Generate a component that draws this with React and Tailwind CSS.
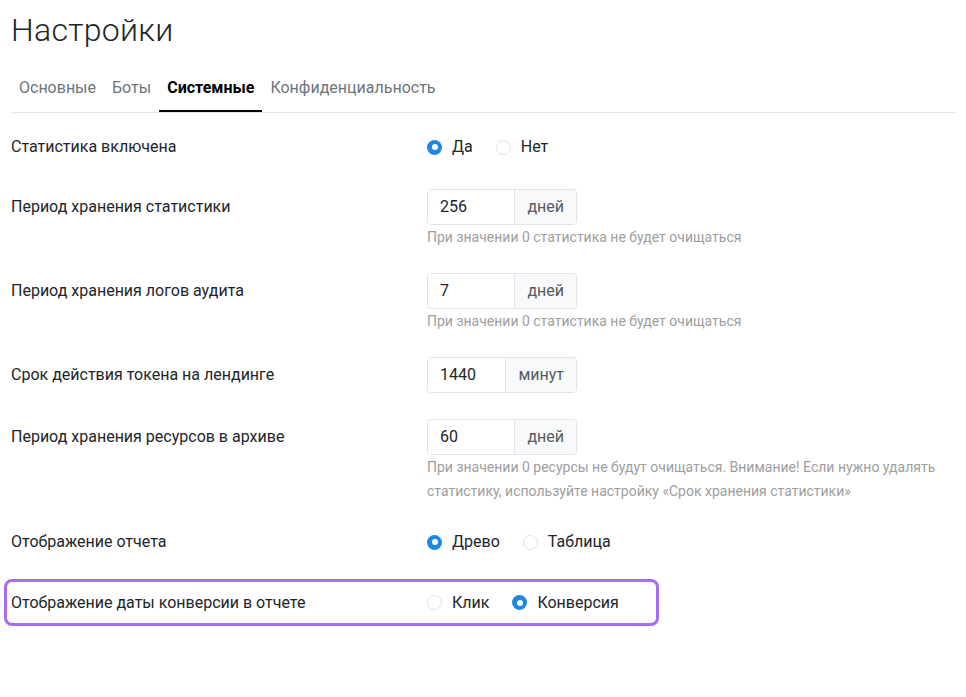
import React from "react";

const tabs = [
  { name: "Основные" },
  { name: "Боты" },
  { name: "Системные", active: true },
  { name: "Конфиденциальность" },
];

const Radio = ({ label, checked }) => (
  <label className="flex items-center gap-[10px] text-base text-[#212529]">
    {checked ? (
      <span className="w-[15px] h-[15px] rounded-full bg-[#1e88e5] flex items-center justify-center">
        <span className="w-[6px] h-[6px] rounded-full bg-white" />
      </span>
    ) : (
      <span className="w-[15px] h-[15px] rounded-full border border-[#dee2e6] bg-white" />
    )}
    <span>{label}</span>
  </label>
);

const RadioGroup = ({ options, value }) => (
  <div className="flex items-center gap-[23px] h-9">
    {options.map((o) => (
      <Radio key={o} label={o} checked={o === value} />
    ))}
  </div>
);

const NumberInput = ({ value, unit }) => (
  <div className="flex w-[150px] h-9 rounded border border-[#e0e3e7] overflow-hidden">
    <div className="flex-1 px-3 flex items-center text-base text-[#212529] bg-white">{value}</div>
    <div className="px-3 flex items-center text-base text-[#555b61] bg-[#f8f9fa] border-l border-[#e0e3e7]">
      {unit}
    </div>
  </div>
);

const Help = ({ children }) => (
  <div className="text-sm leading-6 text-[#9e9e9e] w-[520px]">{children}</div>
);

const Row = ({ label, children, className = "" }) => (
  <div className={`flex ${className}`}>
    <div className="w-[416px] shrink-0 leading-9 text-base text-[#212529]">{label}</div>
    <div>{children}</div>
  </div>
);

export default function App() {
  return (
    <div className="min-h-screen bg-white font-['Roboto',sans-serif] px-[11px]">
      <h1 className="pt-[10px] text-[32px] leading-[40px] font-light text-[#212529] tracking-[0.3px]">
        Настройки
      </h1>

      <nav className="mt-[26px] flex border-b border-[#e2e4e7]">
        {tabs.map((t) => (
          <div
            key={t.name}
            className={`px-2 pb-[10px] leading-6 text-base border-b-2 ${
              t.active ? "border-black text-black font-bold" : "border-transparent text-[#6c757d]"
            }`}
          >
            {t.name}
          </div>
        ))}
      </nav>

      <div className="flex flex-col">
        <Row label="Статистика включена" className="mt-[16px]">
          <RadioGroup options={["Да", "Нет"]} value="Да" />
        </Row>

        <Row label="Период хранения статистики" className="mt-[24px]">
          <NumberInput value="256" unit="дней" />
          <Help>При значении 0 статистика не будет очищаться</Help>
        </Row>

        <Row label="Период хранения логов аудита" className="mt-[24px]">
          <NumberInput value="7" unit="дней" />
          <Help>При значении 0 статистика не будет очищаться</Help>
        </Row>

        <Row label="Срок действия токена на лендинге" className="mt-[24px]">
          <NumberInput value="1440" unit="минут" />
        </Row>

        <Row label="Период хранения ресурсов в архиве" className="mt-[26px]">
          <NumberInput value="60" unit="дней" />
          <Help>
            При значении 0 ресурсы не будут очищаться. Внимание! Если нужно удалять статистику,
            используйте настройку «Срок хранения статистики»
          </Help>
        </Row>

        <Row label="Отображение отчета" className="mt-[21px]">
          <RadioGroup options={["Древо", "Таблица"]} value="Древо" />
        </Row>

        <div className="mt-[19px] -ml-[7px] w-[655px] h-[47px] rounded-lg border-[3px] border-[#a36ef5] pl-[4px] flex items-center">
          <div className="w-[416px] shrink-0 text-base text-[#212529]">
            Отображение даты конверсии в отчете
          </div>
          <RadioGroup options={["Клик", "Конверсия"]} value="Конверсия" />
        </div>
      </div>
    </div>
  );
}
